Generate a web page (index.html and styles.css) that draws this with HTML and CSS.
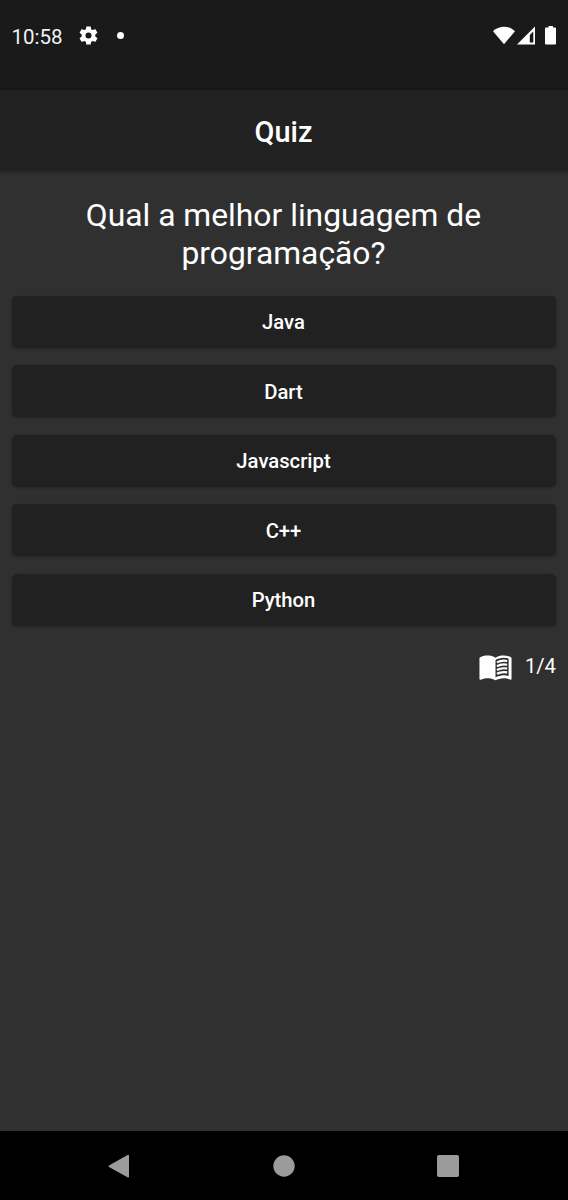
FILE: index.html
```html
<!DOCTYPE html>
<html lang="pt-BR">
<head>
<meta charset="utf-8">
<title>Quiz</title>
<link rel="stylesheet" href="styles.css">
</head>
<body>
<div class="screen">
  <div class="status">
    <span class="clock">10:58</span>
    <svg class="gear" viewBox="2 2 20 20"><path fill-rule="evenodd" d="M19.14 12.94c.04-.3.06-.61.06-.94 0-.32-.02-.64-.07-.94l2.03-1.58c.18-.14.23-.41.12-.61l-1.92-3.32c-.12-.22-.37-.29-.59-.22l-2.39.96c-.5-.38-1.03-.7-1.62-.94l-.36-2.54c-.04-.24-.24-.41-.48-.41h-3.84c-.24 0-.43.17-.47.41l-.36 2.54c-.59.24-1.13.57-1.62.94l-2.39-.96c-.22-.08-.47 0-.59.22L2.74 8.87c-.12.21-.08.47.12.61l2.03 1.58c-.05.3-.09.63-.09.94s.02.64.07.94l-2.03 1.58c-.18.14-.23.41-.12.61l1.92 3.32c.12.22.37.29.59.22l2.39-.96c.5.38 1.03.7 1.62.94l.36 2.54c.05.24.24.41.48.41h3.84c.24 0 .44-.17.47-.41l.36-2.54c.59-.24 1.13-.56 1.62-.94l2.39.96c.22.08.47 0 .59-.22l1.92-3.32c.12-.22.07-.47-.12-.61zM12 15.200a3.200 3.200 0 1 1 0-6.400 3.200 3.200 0 0 1 0 6.400z"/></svg>
    <span class="dot"></span>
    <svg class="signals" viewBox="0 0 66 22"><path d="M0 6.200C6 .2 16.200 .2 22 6.200L11 19.200z"/><path fill-rule="evenodd" d="M24 19.500L42 1.500V19.500zM36.800 10V17.500H40.300V6.500z"/><path d="M55.500 1H60V2.500H62Q63 2.500 63 3.500V18.500Q63 19.500 62 19.500H53Q52 19.500 52 18.500V3.500Q52 2.500 53 2.500H55.500z"/></svg>
  </div>
  <header class="appbar"><h1>Quiz</h1></header>
  <main class="content">
    <h2 class="question">Qual a melhor linguagem de programação?</h2>
    <div class="answers">
      <button>Java</button>
      <button>Dart</button>
      <button>Javascript</button>
      <button>C++</button>
      <button>Python</button>
    </div>
    <div class="progress">
      <svg class="book" viewBox="0 0 24 24"><path fill-rule="evenodd" d="M21 5c-1.110-.35-2.330-.5-3.500-.5-1.950 0-4.050.4-5.500 1.500-1.450-1.100-3.550-1.500-5.500-1.500S2.450 4.900 1 6v14.650c0 .25.25.5.5.5.1 0 .15-.05.25-.05C3.100 20.450 5.050 20 6.500 20c1.950 0 4.050.4 5.500 1.500 1.350-.85 3.800-1.500 5.500-1.500 1.650 0 3.350.3 4.750 1.050.1.050.15.050.25.050.25 0 .5-.25.5-.5V6c-.6-.45-1.250-.75-2-1zm0 13.500c-1.100-.35-2.300-.5-3.500-.5-1.700 0-4.150.65-5.500 1.500V7.500c1.350-.85 3.800-1.500 5.500-1.500 1.200 0 2.400.15 3.500.5z"/><path class="lines" d="M13 9.200Q16 7.500 20 8.200M13 11.800Q16 10.100 20 10.800M13 14.400Q16 12.700 20 13.400M13 17Q16 15.300 20 16"/></svg>
      <span>1/4</span>
    </div>
  </main>
  <nav class="navbar">
    <svg viewBox="0 0 24 24"><path d="M2 11.500 20.500 1Q22 .3 22 2V22.500Q22 24 20.500 23.200L2 13Q.8 12.200 2 11.500z"/></svg>
    <svg viewBox="0 0 24 24"><circle cx="12" cy="12" r="10.700"/></svg>
    <svg viewBox="0 0 24 24"><rect x="1" y="1" width="22" height="22" rx="2"/></svg>
  </nav>
</div>
</body>
</html>
```
FILE: styles.css
```css
* { box-sizing: border-box; }
body { margin: 0; font-family: Roboto, sans-serif; color: #fff; background: #303030; }
svg { display: block; fill: currentColor; flex: none; }
.screen { width: 568px; height: 1200px; display: flex; flex-direction: column; }
.status { height: 90px; padding: 25px 4px 0 11.500px; background: #1a1a1a; display: flex; align-items: flex-start; }
.clock { font-size: 20.500px; line-height: 24px; width: 67.500px; color: #f2f2f2; }
.gear { width: 19px; height: 19px; margin-top: 1px; }
.dot { width: 7px; height: 7px; margin: 7px 0 0 19px; border-radius: 50%; background: #fff; }
.signals { width: 66px; height: 22px; margin-left: auto; margin-right: 5px; }
.appbar { height: 81px; padding: 2px 1px 0 0; background: #212121; display: flex; align-items: center; justify-content: center; box-shadow: 0 1px 5px rgba(0,0,0,.3); }
h1 { margin: 0; font-size: 28.900px; font-weight: 500; line-height: 34px; }
.content { flex: 1; padding: 26px 12px 0; }
.question { margin: 0 50.500px 23.500px 49.500px; font-size: 31.800px; font-weight: 400; line-height: 37.500px; text-align: center; }
.answers { display: flex; flex-direction: column; gap: 17.500px; }
button { height: 52px; border: 0; padding: 1px 1px 0 0; border-radius: 5px; background: #212121; color: #fff; font: 500 20.250px/24px Roboto, sans-serif; box-shadow: 0 1px 3px rgba(0,0,0,.25); }
.progress { display: flex; justify-content: flex-end; align-items: center; gap: 12px; margin-top: 23px; font-size: 20.250px; line-height: 34px; }
.book { width: 35px; height: 35px; }
.lines { fill: none; stroke: currentColor; stroke-width: 1.500; }
.navbar { height: 69px; background: #000; color: #9b9b9b; display: flex; justify-content: space-between; padding: 22.500px 108px 0 107px; }
.navbar svg { width: 24px; height: 24px; }
```
